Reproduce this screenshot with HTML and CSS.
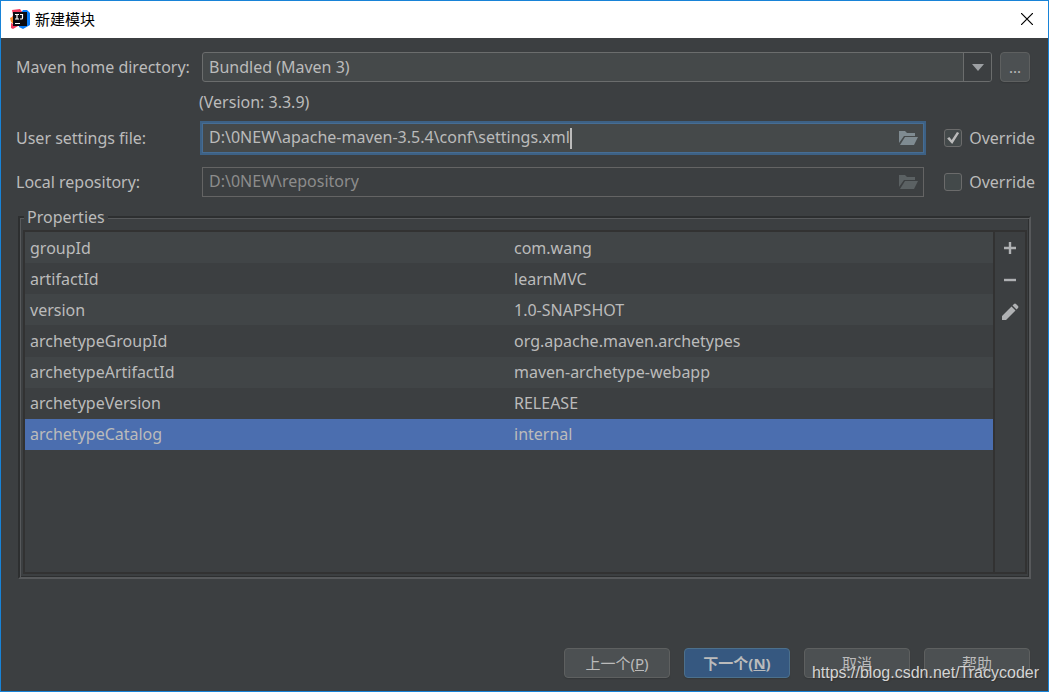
FILE: index.html
```html
<!DOCTYPE html>
<html lang="zh-CN">
<head>
<meta charset="utf-8">
<title>新建模块</title>
<link rel="stylesheet" href="styles.css">
</head>
<body>
<div class="window">
  <header class="titlebar">
    <svg class="logo" viewBox="0 0 20 20" aria-hidden="true">
      <path d="M2 1l8-1 3 4-6 6-6 1 2-5z" fill="#f4395e"/>
      <path d="M0 9l4-2 1 9-4-3z" fill="#fc8b2c"/>
      <path d="M13 1h4l3 3v12l-7 4-4-2 2-14z" fill="#087cfa"/>
      <path d="M1 14l7 3-5 3-2-1z" fill="#f4395e"/>
      <path d="M3 3h14v14H3z" fill="#0b0b12"/>
      <path d="M5 5.500h4M7 5.500v4.500M5 10h4M10 5.500h3M12.500 5v4q0 1-1 1H10" fill="none" stroke="#fff" stroke-width="1.200"/>
      <path d="M5 14.500h5" stroke="#fff" stroke-width="1"/>
    </svg>
    <h1 class="title">新建模块</h1>
    <button class="close" type="button" aria-label="关闭">
      <svg viewBox="0 0 12 12"><path d="M0 0l12 12M12 0L0 12" stroke="#000" stroke-width="1.2"/></svg>
    </button>
  </header>

  <form class="content">
    <div class="row">
      <label class="label" for="home">Maven home directory:</label>
      <div class="combo">
        <select id="home"><option>Bundled (Maven 3)</option></select>
        <span class="arrow"><svg viewBox="0 0 12 7"><path d="M0 0h12L6 7z" fill="#9da0a3"/></svg></span>
      </div>
      <button class="button more" type="button">...</button>
    </div>
    <p class="version">(Version: 3.3.9)</p>
    <div class="row">
      <label class="label" for="settings">User settings file:</label>
      <div class="field focused">
        <input id="settings" type="text" value="D:\0NEW\apache-maven-3.5.4\conf\settings.xml">
        <span class="caret"></span>
        <button class="browse" type="button" aria-label="Browse settings file">
          <svg viewBox="0 0 19 14"><path d="M0 0h6l2 2h8v3H5L0 12z"/><path d="M6 6h13l-4 8H1z"/></svg>
        </button>
      </div>
      <label class="override"><input type="checkbox" checked>Override</label>
    </div>
    <div class="row local">
      <label class="label" for="repo">Local repository:</label>
      <div class="field disabled">
        <input id="repo" type="text" value="D:\0NEW\repository" disabled>
        <button class="browse" type="button" aria-label="Browse repository" disabled>
          <svg viewBox="0 0 19 14"><path d="M0 0h6l2 2h8v3H5L0 12z"/><path d="M6 6h13l-4 8H1z"/></svg>
        </button>
      </div>
      <label class="override"><input type="checkbox">Override</label>
    </div>

    <fieldset class="properties">
      <legend>Properties</legend>
      <div class="panel">
        <div class="list">
          <table>
            <tbody>
              <tr><td>groupId</td><td>com.wang</td></tr>
              <tr><td>artifactId</td><td>learnMVC</td></tr>
              <tr><td>version</td><td>1.0-SNAPSHOT</td></tr>
              <tr><td>archetypeGroupId</td><td>org.apache.maven.archetypes</td></tr>
              <tr><td>archetypeArtifactId</td><td>maven-archetype-webapp</td></tr>
              <tr><td>archetypeVersion</td><td>RELEASE</td></tr>
              <tr class="selected"><td>archetypeCatalog</td><td>internal</td></tr>
            </tbody>
          </table>
        </div>
        <div class="tools">
          <button type="button" aria-label="Add"><svg viewBox="0 0 18 18"><path d="M9 3v12M3 9h12" stroke="#afb1b3" stroke-width="2.4"/></svg></button>
          <button type="button" aria-label="Remove"><svg viewBox="0 0 18 18"><path d="M3 9h12" stroke="#afb1b3" stroke-width="2.4"/></svg></button>
          <button type="button" aria-label="Edit"><svg viewBox="0 0 18 18"><path d="M1 13l9.500-9.500 4 4L5 17H1zM11.500 2.500L13 1q1-.8 2 0l2 2q.8 1 0 2l-1.500 1.500z" fill="#afb1b3"/></svg></button>
        </div>
      </div>
    </fieldset>

    <footer class="actions">
      <button class="button" type="button">上一个(<u>P</u>)</button>
      <button class="button primary" type="button">下一个(<u>N</u>)</button>
      <button class="button" type="button">取消</button>
      <button class="button" type="button">帮助</button>
    </footer>
  </form>
  <div class="watermark">https://blog.csdn.net/Tracycoder</div>
</div>
</body>
</html>
```
FILE: styles.css
```css
* {
  box-sizing: border-box;
}

body {
  margin: 0;
  background: #3c3f41;
  color: #bbbbbb;
  font: 16px/22px "Noto Sans", "Noto Sans CJK SC", sans-serif;
}

button,
input,
select {
  margin: 0;
  padding: 0;
  border: 0;
  background: none;
  color: inherit;
  font: inherit;
}

svg {
  display: block;
}

.window {
  position: relative;
  display: flex;
  flex-direction: column;
  min-height: 100vh;
  border: 1px solid #1883d7;
}

.titlebar {
  display: flex;
  align-items: center;
  gap: 5px;
  height: 37px;
  padding: 0 15px 2px 9px;
  background: #ffffff;
  color: #000000;
}

.logo {
  width: 20px;
  height: 20px;
}

.title {
  flex: 1;
  margin: 0;
  font: 15px/22px "Noto Sans CJK SC", sans-serif;
}

.close svg {
  width: 12px;
  height: 12px;
}

.content {
  flex: 1;
  display: flex;
  flex-direction: column;
  padding: 14px 18px 13px 15px;
}

.row {
  display: flex;
  align-items: center;
  height: 30px;
}

.label {
  flex: 0 0 186px;
}

.combo {
  flex: 1;
  display: flex;
  height: 30px;
  border: 1px solid #6b6d6d;
  border-radius: 3px;
  background: #45494a;
  overflow: hidden;
}

.combo select {
  flex: 1;
  padding: 0 6px;
  appearance: none;
  outline: none;
}

.arrow {
  display: flex;
  align-items: center;
  justify-content: center;
  width: 28px;
  border-left: 1px solid #6b6d6d;
  background: #3c3f41;
  pointer-events: none;
}

.arrow svg {
  width: 12px;
  height: 7px;
}

.button {
  width: 106px;
  height: 30px;
  border: 1px solid #5e6060;
  border-radius: 4px;
  background: #4c5052;
  box-shadow: 0 1px 1px #35383a;
  font-size: 15px;
}

.more {
  width: 30px;
  margin-left: 8px;
}

.version {
  margin: 9px 0 10px 183px;
}

.field {
  flex: 1;
  display: flex;
  align-items: center;
  height: 30px;
  padding: 0 5px 0 6px;
  border: 1px solid #646464;
}

.field input {
  padding-bottom: 2px;
  field-sizing: content;
  outline: none;
}

.focused {
  border-color: #466d94;
  background: #45494a;
  box-shadow: 0 0 0 2px #3d6185;
}

.disabled input {
  color: #8c8c8c;
}

.caret {
  width: 2px;
  height: 21px;
  background: #bbbbbb;
}

.browse {
  margin-left: auto;
}

.browse svg {
  width: 19px;
  height: 14px;
  fill: #7f8b91;
}

.browse:disabled svg {
  fill: #5b6163;
}

.override {
  display: flex;
  align-items: center;
  gap: 7px;
  margin: 0 -5px 0 20px;
}

.override input {
  display: grid;
  place-items: center;
  width: 18px;
  height: 18px;
  border: 1px solid #6b6b6b;
  border-radius: 3px;
  background: #43494a;
  appearance: none;
}

.override input:checked::before {
  content: "";
  width: 12px;
  height: 12px;
  background: #bbbbbb;
  clip-path: polygon(0 55%, 18% 42%, 38% 66%, 82% 0, 100% 8%, 42% 100%);
}

.local {
  margin-top: 14px;
}

.properties {
  flex: 1;
  min-width: 0;
  margin: 9px -1px 0 2px;
  padding: 2px 2px 3px 3px;
  border: 2px solid;
  border-color: #2d2f30 #57595b #57595b #2d2f30;
  box-shadow: inset 1px 1px #57595b, inset -1px -1px #2d2f30;
}

.properties legend {
  margin-left: 1px;
  padding: 0 3px;
  background: #3c3f41;
}

.panel {
  display: flex;
  min-height: calc(100vh - 348px);
  border: 2px solid #323232;
}

.list {
  flex: 1;
  border-right: 2px solid #323232;
}

.list table {
  width: 100%;
  height: 218px;
  border-collapse: collapse;
  table-layout: fixed;
}

.list td {
  height: 31px;
  padding: 0 5px;
}

.list tr:nth-child(odd) {
  background: #414547;
}

.list .selected:nth-child(n) {
  background: #4b6eaf;
}

.tools {
  display: flex;
  flex-direction: column;
  align-items: center;
  gap: 14px;
  width: 30px;
  padding-top: 7px;
}

.tools svg {
  width: 18px;
  height: 18px;
}

.actions {
  display: flex;
  justify-content: flex-end;
  gap: 14px;
  margin-top: 69px;
}

.primary {
  border-color: #4c708c;
  background: #365880;
  font-weight: bold;
}

.watermark {
  position: absolute;
  right: 9px;
  bottom: 7px;
  color: #d4d4d4;
  font: 16px/22px "Liberation Sans", Arial, sans-serif;
  text-shadow: 1px 1px 1px #333333;
  pointer-events: none;
}
```
